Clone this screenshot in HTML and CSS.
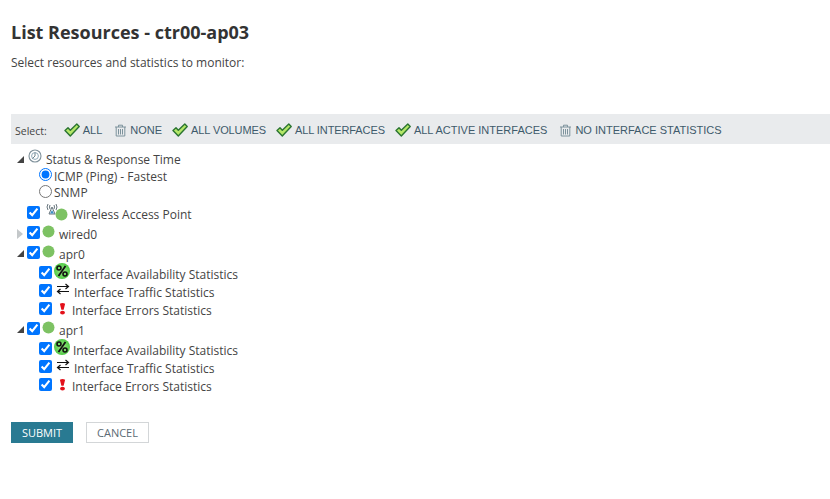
FILE: index.html
```html
<!DOCTYPE html>
<html lang="en">
<head>
<meta charset="utf-8">
<title>List Resources</title>
<link rel="stylesheet" href="styles.css">
</head>
<body>
<svg class="defs" width="0" height="0" aria-hidden="true">
  <defs>
    <radialGradient id="pct-fill" cx="0.5" cy="0.5" r="0.55">
      <stop offset="0" stop-color="#a5ec8e"/>
      <stop offset="1" stop-color="#45c63c"/>
    </radialGradient>
    <symbol id="check" viewBox="0 0 16 14">
      <path d="M1 7.5 L4 4.8 L6.3 7.2 L12.8 0.9 L15.2 3.4 L6.3 13 Z" fill="#b4e768" stroke="#2a7431" stroke-width="1.4" stroke-linejoin="round"/>
    </symbol>
    <symbol id="trash" viewBox="0 0 13 13">
      <path d="M1 3H12M4.5 3V1.2H8.5V3M2.2 3V12H10.8V3M4.5 5V10.5M6.5 5V10.5M8.5 5V10.5" fill="none" stroke="#7c929c" stroke-width="1"/>
    </symbol>
    <symbol id="dot" viewBox="0 0 13 13"><circle cx="6.5" cy="6.5" r="6" fill="#7dc263"/></symbol>
    <symbol id="percent" viewBox="0 0 16 16">
      <circle cx="8" cy="8" r="8" fill="url(#pct-fill)"/>
      <path d="M11.5 3 L4.5 13" stroke="#111" stroke-width="1.8"/>
      <circle cx="5" cy="5" r="2" fill="none" stroke="#111" stroke-width="1.6"/>
      <circle cx="11" cy="11" r="2" fill="none" stroke="#111" stroke-width="1.6"/>
    </symbol>
    <symbol id="traffic" viewBox="0 0 14 12">
      <path d="M1 3.5H12M9.5 1L12.5 3.5L9.5 6M13 8.5H2M4.5 6L1.5 8.5L4.5 11" fill="none" stroke="#111" stroke-width="1.2"/>
    </symbol>
    <symbol id="error" viewBox="0 0 8 14">
      <path d="M1 1.5Q4 0 7 1.5L5.3 8.5H2.7Z" fill="#e3101a"/>
      <ellipse cx="4" cy="11.7" rx="2.8" ry="2.1" fill="#e3101a"/>
    </symbol>
    <symbol id="open" viewBox="0 0 7 7"><path d="M7 0V7H0Z" fill="#444"/></symbol>
    <symbol id="closed" viewBox="0 0 7 10"><path d="M0 0L6 5L0 10Z" fill="#c4c8ca"/></symbol>
  </defs>
</svg>
<main class="page">
  <h1 class="title">List Resources - ctr00-ap03</h1>
  <p class="intro">Select resources and statistics to monitor:</p>

  <div class="select-bar">
    <span class="select-label">Select:</span>
    <a class="action gap-wide"><svg class="ic-check"><use href="#check"/></svg>ALL</a>
    <a class="action gap-narrow"><svg class="ic-trash"><use href="#trash"/></svg>NONE</a>
    <a class="action tight gap-narrow"><svg class="ic-check"><use href="#check"/></svg>ALL VOLUMES</a>
    <a class="action tight gap-narrow"><svg class="ic-check"><use href="#check"/></svg>ALL INTERFACES</a>
    <a class="action gap-wide"><svg class="ic-check"><use href="#check"/></svg>ALL ACTIVE INTERFACES</a>
    <a class="action"><svg class="ic-trash"><use href="#trash"/></svg>NO INTERFACE STATISTICS</a>
  </div>

  <div class="tree">
    <div class="row row-status">
      <svg class="tw-open"><use href="#open"/></svg>
      <svg class="ic-status" viewBox="0 0 14 14"><circle cx="7" cy="7" r="6" fill="#fff" stroke="#7f919b" stroke-width="1.1"/><circle cx="7" cy="7" r="3.4" fill="none" stroke="#8fa9b8" stroke-width="1"/><path d="M7 7L4.5 9.5M7 7V3.5" stroke="#6f858f" stroke-width="1"/></svg>
      <span class="label-status">Status &amp; Response Time</span>
    </div>
    <label class="row row-radio radio-icmp"><input type="radio" name="poll" checked>ICMP (Ping) - Fastest</label>
    <label class="row row-radio radio-snmp"><input type="radio" name="poll">SNMP</label>

    <div class="row row-wap">
      <input type="checkbox" checked>
      <span class="wap-icon">
        <svg class="ic-wap" viewBox="0 0 14 13"><path d="M7 4L4 11H10ZM3 1Q1 4 3 7M5 2Q4 4 5 6M11 1Q13 4 11 7M9 2Q10 4 9 6" fill="none" stroke="#67757d" stroke-width="1"/><path d="M5 10.5H9L7 7Z" fill="#3b8fc4"/></svg>
        <svg class="ic-dot wap-dot"><use href="#dot"/></svg>
      </span>
      <span>Wireless Access Point</span>
    </div>

    <div class="row row-node">
      <svg class="tw-closed"><use href="#closed"/></svg>
      <input type="checkbox" checked>
      <svg class="ic-dot"><use href="#dot"/></svg>
      <span class="label-node">wired0</span>
    </div>

    <div class="row row-node row-parent">
      <svg class="tw-open tw-node"><use href="#open"/></svg>
      <input type="checkbox" checked>
      <svg class="ic-dot"><use href="#dot"/></svg>
      <span class="label-node">apr0</span>
    </div>
    <div class="row row-stat">
      <input type="checkbox" checked><svg class="ic-percent"><use href="#percent"/></svg><span class="label-avail">Interface Availability Statistics</span>
    </div>
    <div class="row row-stat">
      <input type="checkbox" checked><svg class="ic-traffic"><use href="#traffic"/></svg><span class="label-traffic">Interface Traffic Statistics</span>
    </div>
    <div class="row row-stat row-stat-last">
      <input type="checkbox" checked><svg class="ic-error"><use href="#error"/></svg><span class="label-error">Interface Errors Statistics</span>
    </div>

    <div class="row row-node row-parent">
      <svg class="tw-open tw-node"><use href="#open"/></svg>
      <input type="checkbox" checked>
      <svg class="ic-dot"><use href="#dot"/></svg>
      <span class="label-node">apr1</span>
    </div>
    <div class="row row-stat">
      <input type="checkbox" checked><svg class="ic-percent"><use href="#percent"/></svg><span class="label-avail">Interface Availability Statistics</span>
    </div>
    <div class="row row-stat">
      <input type="checkbox" checked><svg class="ic-traffic"><use href="#traffic"/></svg><span class="label-traffic">Interface Traffic Statistics</span>
    </div>
    <div class="row row-stat row-stat-last">
      <input type="checkbox" checked><svg class="ic-error"><use href="#error"/></svg><span class="label-error">Interface Errors Statistics</span>
    </div>
  </div>

  <div class="buttons">
    <button class="btn btn-primary" type="button">SUBMIT</button>
    <button class="btn btn-secondary" type="button">CANCEL</button>
  </div>
</main>
</body>
</html>
```
FILE: styles.css
```css
* { box-sizing: border-box; }
html, body { margin: 0; padding: 0; background: #fff; }
body { font-family: "Open Sans", sans-serif; color: #444; overflow: hidden; }
.defs { position: absolute; }
.page { width: 830px; height: 499px; padding: 20px 0 0 11px; }
.title { margin: 0; font-size: 18px; line-height: 24px; font-weight: 700; color: #333; }
.intro { margin: 11px 0 0; font-size: 12px; line-height: 16px; color: #444; }

.select-bar {
  display: flex; align-items: center; height: 30px; margin-top: 43px; padding: 2px 0 0 4px;
  background: #e9ebed; font-size: 11px;
}
.select-label { margin-right: 17px; color: #444; font-size: 10.5px; padding-top: 1px; }
.action {
  display: flex; align-items: center; margin-right: 11px;
  font-family: "Liberation Sans", sans-serif; font-size: 11px; color: #3e5a6b;
}
.gap-wide { margin-right: 12px; }
.gap-narrow { margin-right: 10px; }
.tight { letter-spacing: -0.1px; }
.ic-check { width: 16px; height: 14px; margin-right: 3px; }
.ic-trash { width: 13px; height: 13px; margin-right: 3px; }

.tree { margin-top: 6px; font-size: 12px; color: #444; }
.row { display: flex; align-items: center; }
.row input { margin: 0; flex: none; width: 13px; height: 13px; accent-color: #0075ff; }
.row-status { height: 18px; padding-left: 6px; }
.tw-open { width: 7px; height: 7px; flex: none; }
.tw-closed { width: 7px; height: 10px; flex: none; margin-right: 3px; }
.ic-status { width: 14px; height: 14px; margin: -7px 0 0 4px; flex: none; }
.label-status { margin-left: 4px; }
.row-radio { height: 16px; padding-left: 28px; }
.row-radio input { margin-right: 2px; }
.radio-icmp input { margin-top: -3px; }
.radio-snmp input { margin-top: -1px; }

.row-wap { height: 20px; margin-top: 4px; padding-left: 16px; }
.row-wap input { margin-top: -4px; }
.wap-icon { position: relative; width: 27px; height: 16px; margin-left: 5px; flex: none; }
.ic-wap { position: absolute; left: 0; top: -3px; width: 14px; height: 13px; }
.wap-dot { position: absolute; left: 10px; top: 2px; }
.ic-dot { width: 13px; height: 13px; flex: none; }

.row-node { height: 20px; padding-left: 6px; }
.row-parent { margin-bottom: 1px; }
.row-node input { margin-top: -3px; }
.row-node .ic-dot { margin: -6px 0 0 2px; }
.tw-node { margin-right: 3px; margin-top: -1px; }
.label-node { margin-left: 4px; }

.row-stat { height: 18px; padding-left: 28px; }
.row-stat-last { margin-bottom: 1px; }
.row-stat input { margin-top: -4px; }
.ic-percent { width: 16px; height: 16px; flex: none; margin: -6px 0 0 2px; }
.ic-traffic { width: 14px; height: 12px; flex: none; margin: -6px 0 0 4px; }
.ic-error { width: 7px; height: 13px; flex: none; margin: -4px 0 0 7px; }
.label-avail { margin-left: 3px; }
.label-traffic { margin-left: 4px; }
.label-error { margin-left: 6px; }

.buttons { display: flex; gap: 13px; margin-top: 27px; }
.btn { height: 21px; padding: 0; font-family: "Open Sans", sans-serif; font-size: 11px; cursor: pointer; }
.btn-primary { width: 62px; background: #297a92; border: 0; color: #fff; }
.btn-secondary { width: 63px; background: #fff; border: 1px solid #d3d6d8; color: #5b6b74; }
```
